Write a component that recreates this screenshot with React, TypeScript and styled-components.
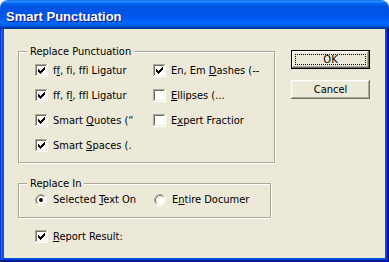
import React from 'react'
import styled, { createGlobalStyle } from 'styled-components'

const GlobalStyle = createGlobalStyle`
  html, body {
    margin: 0;
    padding: 0;
    background: #fff;
  }
  body {
    font-family: "DejaVu Sans Condensed", "DejaVu Sans", sans-serif;
    font-size: 11px;
    font-variant-ligatures: none;
  }
`

const Window = styled.div`
  width: 389px;
  height: 262px;
  display: flex;
  flex-direction: column;
  border-radius: 8px 8px 0 0;
  overflow: hidden;
`

const TitleBar = styled.div`
  flex: none;
  height: 29px;
  box-sizing: border-box;
  padding: 4px 0 0 6px;
  font: bold 13px/25px "Liberation Sans", Arial, sans-serif;
  color: #fff;
  text-shadow: 1px 1px #0f1089;
  background: linear-gradient(
    180deg,
    #0058ee 0%,
    #3593ff 4%,
    #288eff 6%,
    #127dff 8%,
    #036ffc 10%,
    #0262ee 14%,
    #0057e5 20%,
    #0054e3 24%,
    #0055eb 56%,
    #005bf5 66%,
    #026afe 76%,
    #0062ef 86%,
    #0052d6 92%,
    #0040ab 94%,
    #003092 100%
  );
`

const Frame = styled.div`
  flex: 1;
  display: flex;
  padding: 0 4px 4px;
  background: #0055e5;
  box-shadow: inset -1px -1px #00138c, inset 1px 0 #0831d9, inset -2px -2px #001ea0,
    inset 2px 0 #166aee, inset -3px -3px #003bda, inset 3px 0 #0855dd;
`

const Body = styled.div`
  flex: 1;
  display: flex;
  background: #ece9d8;
  color: #000;
`

const LeftCol = styled.div`
  display: flex;
  flex-direction: column;
  padding: 22px 0 0 14px;
`

const RightCol = styled.div`
  display: flex;
  flex-direction: column;
  gap: 11px;
  padding: 21px 0 0 16px;
`

const Group = styled.div<{ $w: number }>`
  width: ${p => p.$w}px;
  box-sizing: border-box;
  border: 1px solid #aca899;
  box-shadow: 1px 1px 0 #fff, inset 1px 1px 0 #fff;
  & + & {
    margin-top: 20px;
  }
`

const Legend = styled.div`
  width: fit-content;
  margin: -7px 0 0 8px;
  padding: 0 3px;
  line-height: 13px;
  background: #ece9d8;
`

const CheckGrid = styled.div`
  display: grid;
  grid-template-columns: 118px auto;
  grid-template-rows: repeat(4, 13px);
  grid-auto-flow: column;
  row-gap: 12px;
  margin-top: 6px;
  padding: 0 0 10px 16px;
`

const RadioRow = styled.div`
  display: grid;
  grid-template-columns: 119px auto;
  margin-top: 3px;
  padding: 0 0 11px 16px;
`

const Item = styled.div`
  display: flex;
  align-items: center;
  gap: 5px;
  height: 13px;
`

const ReportRow = styled(Item)`
  margin: 12px 0 0 17px;
`

const Label = styled.span`
  white-space: nowrap;
  line-height: 13px;
`

const Box = styled.span`
  flex: none;
  width: 13px;
  height: 13px;
  background: #fff;
  box-shadow: inset -1px -1px #fff, inset 1px 1px #aca899, inset -2px -2px #f1efe2,
    inset 2px 2px #716f64;
  svg {
    display: block;
  }
`

const Button = styled.button<{ $default?: boolean }>`
  width: 79px;
  height: 19px;
  padding: 0;
  border: none;
  background: #ece9d8;
  font: 11px/19px "DejaVu Sans Condensed", "DejaVu Sans", sans-serif;
  color: #000;
  text-align: center;
  box-shadow: ${p =>
    p.$default
      ? 'inset 0 0 0 1px #000, inset -2px -2px #716f64, inset 2px 2px #fff, inset -3px -3px #aca899, inset 3px 3px #f1efe2'
      : 'inset -1px -1px #716f64, inset 1px 1px #fff, inset -2px -2px #aca899, inset 2px 2px #f1efe2'};
  outline: ${p => (p.$default ? '1px dotted #000' : 'none')};
  outline-offset: -5px;
`

// classic 7x7 tick, one 3px column per x step
const CHECK_COLS = [5, 6, 7, 6, 5, 4, 3]

const CheckBox = ({ checked }: { checked?: boolean }) => (
  <Box>
    {checked && (
      <svg width="13" height="13" viewBox="0 0 13 13" shapeRendering="crispEdges">
        <path fill="#000" d={CHECK_COLS.map((y, i) => `M${3 + i} ${y}h1v3h-1z`).join('')} />
      </svg>
    )}
  </Box>
)

const RadioSvg = styled.svg`
  flex: none;
  display: block;
  margin-right: 1px;
`

const Radio = ({ checked }: { checked?: boolean }) => (
  <RadioSvg width="12" height="12" viewBox="0 0 12 12">
    <circle cx="6" cy="6" r="4.5" fill="#fff" />
    <path d="M2.11 9.89A5.5 5.5 0 0 1 9.89 2.11" fill="none" stroke="#aca899" />
    <path d="M9.89 2.11A5.5 5.5 0 0 1 2.11 9.89" fill="none" stroke="#fff" />
    <path d="M2.82 9.18A4.5 4.5 0 0 1 9.18 2.82" fill="none" stroke="#716f64" />
    <path d="M9.18 2.82A4.5 4.5 0 0 1 2.82 9.18" fill="none" stroke="#f1efe2" />
    {checked && <circle cx="6" cy="6" r="2" fill="#000" />}
  </RadioSvg>
)

export default function App() {
  return (
    <>
      <GlobalStyle />
      <Window>
        <TitleBar>Smart Punctuation</TitleBar>
        <Frame>
          <Body>
            <LeftCol>
              <Group $w={257}>
                <Legend>Replace Punctuation</Legend>
                <CheckGrid>
                  <Item>
                    <CheckBox checked />
                    <Label>f<u>f</u>, fi, ffi Ligatur</Label>
                  </Item>
                  <Item>
                    <CheckBox checked />
                    <Label>ff, f<u>l</u>, ffl Ligatur</Label>
                  </Item>
                  <Item>
                    <CheckBox checked />
                    <Label>Smart <u>Q</u>uotes (“</Label>
                  </Item>
                  <Item>
                    <CheckBox checked />
                    <Label>Smart <u>S</u>paces (.</Label>
                  </Item>
                  <Item>
                    <CheckBox checked />
                    <Label>En, Em <u>D</u>ashes (--</Label>
                  </Item>
                  <Item>
                    <CheckBox />
                    <Label><u>E</u>llipses (...</Label>
                  </Item>
                  <Item>
                    <CheckBox />
                    <Label>E<u>x</u>pert Fractior</Label>
                  </Item>
                </CheckGrid>
              </Group>
              <Group $w={253}>
                <Legend>Replace In</Legend>
                <RadioRow>
                  <Item>
                    <Radio checked />
                    <Label>Selected <u>T</u>ext On</Label>
                  </Item>
                  <Item>
                    <Radio />
                    <Label>E<u>n</u>tire Documer</Label>
                  </Item>
                </RadioRow>
              </Group>
              <ReportRow>
                <CheckBox checked />
                <Label><u>R</u>eport Result:</Label>
              </ReportRow>
            </LeftCol>
            <RightCol>
              <Button $default>OK</Button>
              <Button>Cancel</Button>
            </RightCol>
          </Body>
        </Frame>
      </Window>
    </>
  )
}
